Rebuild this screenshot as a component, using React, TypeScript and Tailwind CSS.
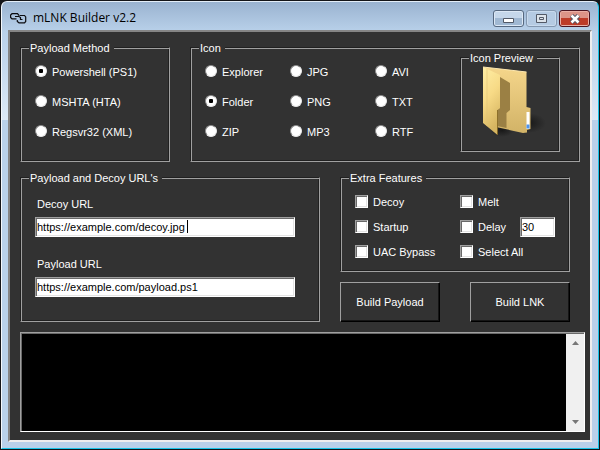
import * as React from "react";

interface IGroupProps {
  title: string;
  className?: string;
  children: React.ReactNode;
}

const Group: React.FunctionComponent<IGroupProps> = (props) => {
  const { title, className = "", children } = props;
  return (
    <fieldset
      className={`relative border border-t-[#202020] border-l-[#202020] border-r-[#a0a0a0] border-b-[#a0a0a0] shadow-[inset_1px_1px_0_#a0a0a0,inset_-1px_-1px_0_#202020] ${className}`}
    >
      <legend className="relative ml-2 bg-[#323232] pt-[2px] pr-1 pl-px">{title}</legend>
      {children}
    </fieldset>
  );
};

interface IRadioProps {
  name: string;
  label: string;
  checked?: boolean;
}

const Radio: React.FunctionComponent<IRadioProps> = (props) => {
  const { name, label, checked } = props;
  return (
    <label className="flex h-[30px] items-center gap-[5px]">
      <input
        type="radio"
        name={name}
        defaultChecked={checked}
        className="size-3 appearance-none rounded-full border border-t-[#8c8c8c] border-l-[#8c8c8c] border-r-[#e8e8e8] border-b-[#e8e8e8] bg-white checked:bg-[radial-gradient(circle,#000_0_2px,#fff_2.5px)]"
      />
      <span className="pt-[2px]">{label}</span>
    </label>
  );
};

const Check: React.FunctionComponent<{ label: string }> = ({ label }) => (
  <label className="flex h-[25px] items-center gap-[5px]">
    <input
      type="checkbox"
      className="size-[13px] appearance-none border border-t-[#a0a0a0] border-l-[#a0a0a0] border-r-white border-b-white bg-white shadow-[inset_1px_1px_0_#696969,inset_-1px_-1px_0_#e3e3e3]"
    />
    <span className="pt-[2px]">{label}</span>
  </label>
);

const inputClass =
  "block h-5 border border-t-[#a0a0a0] border-l-[#a0a0a0] border-r-white border-b-white bg-white px-px text-black outline-none shadow-[inset_1px_1px_0_#696969,inset_-1px_-1px_0_#e3e3e3]";

const buttonClass =
  "h-10 w-[100px] border border-t-[#a0a0a0] border-l-[#a0a0a0] border-r-black border-b-black bg-[#323232] shadow-[inset_-1px_-1px_0_#151515]";

const LinkIcon = () => (
  <svg
    width="17"
    height="11"
    viewBox="0 0 17 11"
    fill="none"
    stroke="#0c0c10"
    strokeWidth="1.2"
    aria-hidden="true"
  >
    <path d="M9 2.500L7.500 .7H2L.6 2v2.500L2 5.800H6.500" />
    <path d="M5 3.500H9L10.500 4.500V6.500H12.500" />
    <path d="M9.500 2.500H14.500L15.700 4V8.500L14.500 9.800H9L7.300 8.500V7" />
  </svg>
);

const FolderIcon = () => (
  <svg width="64" height="72" viewBox="0 0 64 72" aria-hidden="true">
    <defs>
      <linearGradient id="back" x1="0" y1="0" x2="0" y2="1">
        <stop offset="0" stopColor="#f5d68b" />
        <stop offset="1" stopColor="#d2b367" />
      </linearGradient>
      <linearGradient id="front" x1="0" y1="0" x2="0.3" y2="1">
        <stop offset="0" stopColor="#ffeea5" />
        <stop offset="0.5" stopColor="#f7da86" />
        <stop offset="1" stopColor="#d6b561" />
      </linearGradient>
      <radialGradient id="shade">
        <stop offset="0" stopColor="#111" stopOpacity="0.8" />
        <stop offset="1" stopColor="#111" stopOpacity="0" />
      </radialGradient>
    </defs>
    <ellipse cx="46" cy="57" rx="18" ry="10" fill="url(#shade)" />
    <ellipse cx="20" cy="64" rx="12" ry="7" fill="url(#shade)" />
    <path d="M1 1L44.500 6V41L48.500 42V63L45 64V66.500L41 67L14 61Z" fill="url(#back)" />
    <path d="M18 11L28 17V44L24.500 47V62L15 60V43L18 42Z" fill="#9b8044" />
    <path d="M44.500 46h3V63h-3z" fill="#fff" />
    <path d="M44.500 58.500h3V62.500h-3z" fill="#4d94ee" />
    <path d="M1 1L18 9V42L15.500 44V69L1 57Z" fill="url(#front)" />
    <path d="M5 3V60" stroke="#e0c375" strokeWidth="0.6" />
    <path d="M1 1L44.500 6" stroke="#fbe6ae" />
    <path d="M15.500 44V69" stroke="#80631f" strokeWidth="0.8" />
  </svg>
);

export default function App() {
  return (
    <div className="flex min-h-screen flex-col bg-[#141518] p-px font-['Liberation_Sans',sans-serif] text-[11px] leading-[13px] text-white">
      <div className="flex flex-1 flex-col rounded-t-md border border-t-[#e4eef8] border-l-[#f4f8fc] border-r-[#18c4e8] border-b-[#18c4e8] bg-[linear-gradient(#9ab3d0,#b9d1ea_30px,#c0d5ec_50px,#dce9f6_118px,#b9d1ea_118px)] px-[6px] pb-[6px]">
        <header className="flex h-7 items-start text-black">
          <div className="flex flex-1 items-center gap-[6px] pt-[7px] pl-[2px]">
            <LinkIcon />
            <h1 className="font-['Open_Sans','Noto_Sans',sans-serif] text-[12px] leading-[18px]">mLNK Builder v2.2</h1>
          </div>
          <div className="flex gap-[2px] pt-2 pr-[2px]">
            <button
              type="button"
              aria-label="Minimize"
              className="flex h-[17px] w-[31px] items-center justify-center rounded-[3px] border border-[#56687f] bg-gradient-to-b from-[#c5d7ea] from-50% to-[#a0b8d2] to-50% shadow-[inset_0_0_0_1px_#dce8f5]"
            >
              <svg width="11" height="5" className="mt-1"><path d="M.5.5h10v4H.5z" fill="#fff" stroke="#525966" /></svg>
            </button>
            <button
              type="button"
              aria-label="Maximize"
              className="flex h-[17px] w-[31px] items-center justify-center rounded-[3px] border border-[#8498b0] bg-[#b5cbe3] shadow-[inset_0_0_0_1px_#c8daed]"
            >
              <svg width="11" height="9"><path d="M.5.5h10v8H.5zM3.500 3.500h4v2h-4z" fill="#dce3ea" stroke="#525966" /></svg>
            </button>
            <button
              type="button"
              aria-label="Close"
              className="flex h-[17px] w-[31px] items-center justify-center rounded-[3px] border border-[#4b1521] bg-gradient-to-b from-[#dc9488] from-50% to-[#bd3b28] to-50% shadow-[inset_0_0_0_1px_#e9afa6]"
            >
              <svg width="12" height="10" viewBox="0 0 12 10">
                <path d="M2.500 1.500L9.500 8.500M9.500 1.500L2.500 8.500" stroke="#535666" strokeWidth="4.500" />
                <path d="M2.500 1.500L9.500 8.500M9.500 1.500L2.500 8.500" stroke="#fff" strokeWidth="2.500" />
              </svg>
            </button>
          </div>
        </header>

        <main className="flex flex-1 flex-col border-2 border-t-[#858585] border-l-[#858585] border-r-[#eee] border-b-[#eee] bg-[#323232] pt-2 pr-[5px] pb-2 pl-[10px]">
          <div className="flex gap-5 pr-[5px]">
            <Group title="Payload Method" className="h-[122px] w-[150px]">
              <div className="pt-px pl-[14px]">
                <Radio name="method" label="Powershell (PS1)" checked />
                <Radio name="method" label="MSHTA (HTA)" />
                <Radio name="method" label="Regsvr32 (XML)" />
              </div>
            </Group>
            <Group title="Icon" className="h-[122px] flex-1">
              <div className="flex justify-between pr-[19px] pl-[14px]">
                <div className="grid grid-cols-[85px_85px_70px] content-start pt-px">
                  <Radio name="icon" label="Explorer" />
                  <Radio name="icon" label="JPG" />
                  <Radio name="icon" label="AVI" />
                  <Radio name="icon" label="Folder" checked />
                  <Radio name="icon" label="PNG" />
                  <Radio name="icon" label="TXT" />
                  <Radio name="icon" label="ZIP" />
                  <Radio name="icon" label="MP3" />
                  <Radio name="icon" label="RTF" />
                </div>
                <Group title="Icon Preview" className="-mt-[5px] h-[102px] w-[100px]">
                  <div className="pt-px pl-[21px]">
                    <FolderIcon />
                  </div>
                </Group>
              </div>
            </Group>
          </div>

          <div className="mt-2 flex justify-between gap-5 pr-[15px]">
            <Group title="Payload and Decoy URL's" className="max-w-[300px] flex-1">
              <div className="pt-[13px] pr-6 pl-[14px]">
                <label htmlFor="decoy" className="block pl-[2px]">Decoy URL</label>
                <div className="relative mt-[6px]">
                  <input id="decoy" type="text" defaultValue="https://example.com/decoy.jpg" className={`${inputClass} w-full`} />
                  <span className="absolute top-[3px] left-[152px] h-[13px] w-px bg-black" />
                </div>
                <label htmlFor="payload" className="mt-[21px] block pl-[2px]">Payload URL</label>
                <input id="payload" type="text" defaultValue="https://example.com/payload.ps1" className={`${inputClass} mt-[6px] w-full`} />
              </div>
            </Group>
            <div className="flex w-[230px] flex-col gap-[10px]">
              <Group title="Extra Features" className="h-[102px]">
                <div className="grid grid-cols-[105px_1fr] pt-1 pl-[14px]">
                  <Check label="Decoy" />
                  <Check label="Melt" />
                  <Check label="Startup" />
                  <div className="flex items-center">
                    <div className="w-[60px]">
                      <Check label="Delay" />
                    </div>
                    <input type="text" aria-label="Delay seconds" defaultValue="30" className={`${inputClass} w-[35px]`} />
                  </div>
                  <Check label="UAC Bypass" />
                  <Check label="Select All" />
                </div>
              </Group>
              <div className="flex justify-between">
                <button type="button" className={buttonClass}>Build Payload</button>
                <button type="button" className={buttonClass}>Build LNK</button>
              </div>
            </div>
          </div>

          <div className="mt-[10px] flex min-h-[100px] flex-1 border border-t-[#a0a0a0] border-l-[#a0a0a0] border-r-white border-b-white bg-black">
            <textarea
              aria-label="Output"
              readOnly
              className="flex-1 resize-none overflow-hidden border-t border-l border-[#696969] bg-black outline-none"
            />
            <div className="flex w-[18px] flex-col items-center justify-between border-t border-t-[#696969] bg-[#f0f0f0] py-[7px]">
              <svg width="7" height="4" aria-hidden="true"><path d="M3.500 0L7 4H0Z" fill="#777" /></svg>
              <svg width="7" height="4" aria-hidden="true"><path d="M0 0h7L3.500 4Z" fill="#777" /></svg>
            </div>
          </div>
        </main>
      </div>
    </div>
  );
}
